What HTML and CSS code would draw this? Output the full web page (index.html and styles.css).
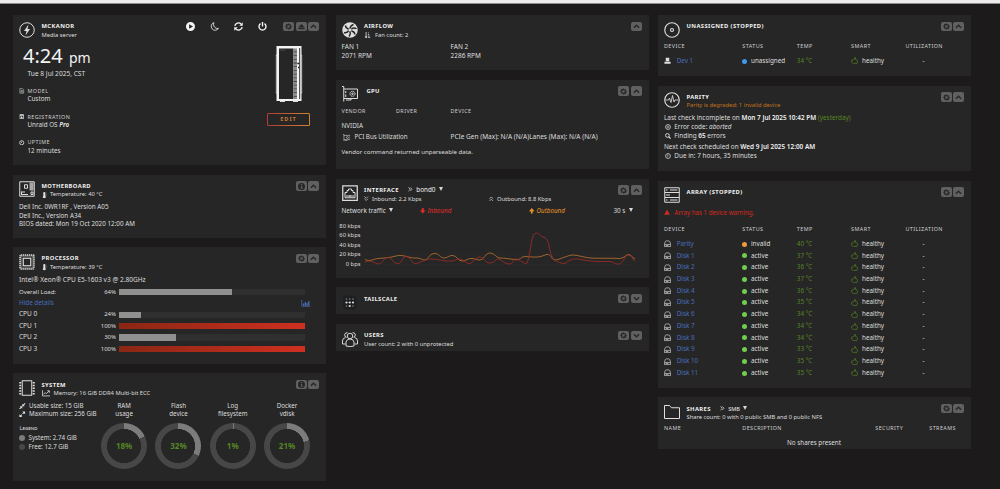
FILE: index.html
```
<!DOCTYPE html>
<html lang="en">
<head>
    <meta charset="utf-8">
    <title>Mckanor Dashboard</title>
    <link rel="stylesheet" href="styles.css">
</head>
<body>
    <svg class="sprite">
        <symbol id="gear" viewBox="0 0 16 16"><path fill-rule="evenodd" d="M7 1h2l.5 2 1.3.6 1.8-1 1.3 1.3-1 1.8.6 1.3 2 .5v2l-2 .5-.6 1.3 1 1.8-1.3 1.3-1.8-1-1.3.6L9 15H7l-.5-2-1.3-.6-1.8 1-1.3-1.3 1-1.8L2.5 9 .5 8.5v-2l2-.5.6-1.3-1-1.8 1.3-1.3 1.8 1L6.5 3zM8 5a3 3 0 1 0 0 6 3 3 0 0 0 0-6z"/></symbol>
        <symbol id="up" viewBox="0 0 16 16"><path d="M2 11l6-6 6 6" fill="none" stroke="currentColor" stroke-width="3"/></symbol>
        <symbol id="down" viewBox="0 0 16 16"><path d="M2 5l6 6 6-6" fill="none" stroke="currentColor" stroke-width="3"/></symbol>
        <symbol id="eject" viewBox="0 0 16 16"><path d="M8 2l7 7.5H1zM1 11h14v3H1z"/></symbol>
        <symbol id="info" viewBox="0 0 16 16"><path fill-rule="evenodd" d="M8 0a8 8 0 1 0 0 16A8 8 0 0 0 8 0zM6.7 2.5h2.800v2.300H6.700zM6 6.500h3.600v5h1V13H6v-1.500h1V8H6z"/></symbol>
        <symbol id="thermo" viewBox="0 0 10 16"><path d="M2 2q0-2 2-2h1q2 0 2 2v8a3.500 3.500 0 1 1-5 0z"/><path d="M8 3h2M8 6h2M8 9h2" stroke="currentColor"/></symbol>
        <symbol id="disk" viewBox="0 0 16 16"><path d="M1.500 9.500V7L3 3q.5-1.500 2-1.500h6q1.500 0 2 1.500l1.500 4v2.500M1 9.500h14v5H1zM4 12h6" fill="none" stroke="currentColor" stroke-width="1.500"/></symbol>
        <symbol id="thumb" viewBox="0 0 16 16"><path d="M4.500 6L8 4V1h2.500v4.500H13l2 3-1.500 5.500H5l-3.500-2.500V6.500z" fill="none" stroke="currentColor" stroke-width="1.500"/></symbol>
    </svg>
    <div class="topbar"></div>
    <div class="dashboard">
        <div class="column">
            <div class="card card-server">
                <div class="head">
                    <svg class="icon" viewBox="0 0 32 32"><circle cx="16" cy="16" r="14.500" fill="none" stroke="currentColor" stroke-width="2"/><path d="M19 5L10 18h5l-2 9 9-13h-5z"/></svg>
                    <div class="heading"><div class="title">MCKANOR</div><div class="sub">Media server</div></div>
                    <div class="power">
                        <svg viewBox="0 0 16 16"><path fill-rule="evenodd" d="M8 0a8 8 0 1 0 0 16A8 8 0 0 0 8 0zM5.500 4l7 4-7 4z"/></svg>
                        <svg viewBox="0 0 16 16"><path d="M7 1a7 7 0 1 0 8 10.500A7.300 7.300 0 0 1 7 1z" fill="none" stroke="currentColor" stroke-width="1.400"/></svg>
                        <svg viewBox="0 0 16 16"><path d="M1.500 7A6.500 6.500 0 0 1 12.500 3.500M14.500 9A6.500 6.500 0 0 1 3.500 12.500" fill="none" stroke="currentColor" stroke-width="2.500"/><path d="M15.500.5v6h-6zM.5 15.500v-6h6z"/></svg>
                        <svg viewBox="0 0 16 16"><path d="M4.500 3a6.200 6.200 0 1 0 7 0M8 0v8" fill="none" stroke="currentColor" stroke-width="2.500"/></svg>
                    </div>
                    <div class="controls"><span><svg><use href="#gear"/></svg></span><span><svg><use href="#eject"/></svg></span><span><svg><use href="#up"/></svg></span></div>
                </div>
                <div class="server-body">
                    <div class="server-info">
                        <div class="clock">4:24 <small>pm</small></div>
                        <div class="date">Tue 8 Jul 2025, CST</div>
                        <div class="fact">
                            <svg viewBox="0 0 14 16"><path d="M1.500 1h7l4 4v10h-11zM4 7h6M4 9.500h6M4 12h6" fill="none" stroke="currentColor" stroke-width="1.500"/></svg>
                            <div><div class="label">MODEL</div><div>Custom</div></div>
                        </div>
                        <div class="fact">
                            <svg viewBox="0 0 14 16"><path fill-rule="evenodd" d="M1 1h12v14H1zM3 5v8h8V5zM7 5.500l1.500 2.500L10 12H4l1.500-4z"/></svg>
                            <div><div class="label">REGISTRATION</div><div>Unraid OS <b><i>Pro</i></b></div></div>
                        </div>
                        <div class="fact">
                            <svg viewBox="0 0 16 16"><circle cx="8" cy="8" r="6" fill="none" stroke="currentColor" stroke-width="2.500"/><path d="M7.300 4.500h1.400v4H6V7h1.300z"/></svg>
                            <div><div class="label">UPTIME</div><div>12 minutes</div></div>
                        </div>
                    </div>
                    <div class="server-side">
                        <svg class="tower" viewBox="0 0 28 56">
                            <path d="M1.500 9v38M26.500 9v38" stroke="#777" stroke-width="1.600"/>
                            <path d="M.8 9h1.500M.8 47h1.500M25.500 9h1.500M25.500 47h1.500" stroke="#ccc" stroke-width=".8"/>
                            <rect x="1.500" y="0" width="25" height="55" fill="#f3f3f3"/>
                            <path d="M5 55.500h5M18 55.500h5" stroke="#ddd" stroke-width="1.500"/>
                            <rect x="4" y="2.500" width="14.500" height="50.500" fill="#262626"/>
                            <path d="M4.500 4h6" stroke="#666" stroke-width=".6"/>
                            <path d="M20.300 2.500v50.500" stroke="#8b8b8b" stroke-width="3.300"/>
                            <path d="M20.300 5.500v46" stroke="#444" stroke-width="3.300" stroke-dasharray=".8 2.900"/>
                            <path d="M24.700 2v51" stroke="#333" stroke-width="1"/>
                            <path d="M22.300 17.500h2M23 21.500h1.500" stroke="#222" stroke-width="1.400"/>
                        </svg>
                        <div class="edit">EDIT</div>
                    </div>
                </div>
            </div>
            <div class="card card-board">
                <div class="head">
                    <svg class="icon" viewBox="0 0 32 32"><path d="M1.500 1.500h29v29h-29z" fill="none" stroke="currentColor" stroke-width="2"/><path d="M11 7.500h6v7h-6zM5 22h7M5 27h13M5 21v7M24 22h4v5h-4z" fill="none" stroke="currentColor" stroke-width="2"/><path d="M21 3h8v16h-8z" opacity=".7"/></svg>
                    <div class="heading"><div class="title">MOTHERBOARD</div><div class="sub"><svg class="mini"><use href="#thermo"/></svg>Temperature: 40 °C</div></div>
                    <div class="controls"><span><svg><use href="#info"/></svg></span><span><svg><use href="#up"/></svg></span></div>
                </div>
                <div class="lines">
                    <div>Dell Inc. 0WR1RF , Version A05</div>
                    <div>Dell Inc., Version A34</div>
                    <div>BIOS dated: Mon 19 Oct 2020 12:00 AM</div>
                </div>
            </div>
            <div class="card card-cpu">
                <div class="head">
                    <svg class="icon" viewBox="0 0 32 32" fill="none" stroke="currentColor"><rect x="2" y="2" width="28" height="28" rx="2" stroke-width="3" stroke-dasharray="2.500 1.500"/><rect x="4" y="4" width="24" height="24" stroke-width="1"/><rect x="8.500" y="8.500" width="15" height="15" stroke-width="2.300"/></svg>
                    <div class="heading"><div class="title">PROCESSOR</div><div class="sub"><svg class="mini"><use href="#thermo"/></svg>Temperature: 39 °C</div></div>
                    <div class="controls"><span><svg><use href="#gear"/></svg></span><span><svg><use href="#up"/></svg></span></div>
                </div>
                <div class="cpu-name">Intel® Xeon® CPU E5-1603 v3 @ 2.80GHz</div>
                <div class="load"><span class="overall">Overall Load:</span><em>64%</em><div class="bar"><div class="fill" style="width:61%"></div></div></div>
                <div class="load-link"><a>Hide details</a><svg viewBox="0 0 18 14"><path d="M1 0v12.500h17" fill="none" stroke="currentColor" stroke-width="1.500"/><path d="M3.500 7H6v4.500H3.500zM7 4h2.500v7.500H7zM10.500 6H13v5.500h-2.500zM14 2h2.500v9.500H14z"/></svg></div>
                <div class="load"><span>CPU 0</span><em>24%</em><div class="bar"><div class="fill" style="width:12%"></div></div></div>
                <div class="load"><span>CPU 1</span><em>100%</em><div class="bar"><div class="fill full" style="width:100%"></div></div></div>
                <div class="load"><span>CPU 2</span><em>30%</em><div class="bar"><div class="fill" style="width:30.700%"></div></div></div>
                <div class="load"><span>CPU 3</span><em>100%</em><div class="bar"><div class="fill full" style="width:100%"></div></div></div>
            </div>
            <div class="card card-system">
                <div class="head">
                    <svg class="icon" viewBox="0 0 32 32" fill="none" stroke="currentColor"><rect x="6.500" y="1.500" width="19" height="29" stroke-width="2"/><path d="M2.500 4v25M29.500 4v25" stroke-width="4" stroke-dasharray="3 2.500"/></svg>
                    <div class="heading"><div class="title">SYSTEM</div><div class="sub"><svg class="mini wide" viewBox="0 0 18 14"><path d="M1 0v13h17M3 9.500l4-4 2.500 2.500L16 2M12 1.500h4.500V6" fill="none" stroke="currentColor" stroke-width="1.800"/></svg>Memory: 16 GiB DDR4 Multi-bit ECC</div></div>
                    <div class="controls"><span><svg><use href="#info"/></svg></span><span><svg><use href="#up"/></svg></span></div>
                </div>
                <div class="memory">
                    <div class="memory-info">
                        <div><svg viewBox="0 0 16 16"><path d="M1 15l6-6M15 1L9 7" stroke="currentColor" stroke-width="2.500"/><path d="M8 14V8H2zM8 2v6h6z"/></svg>Usable size: 15 GiB</div>
                        <div><svg viewBox="0 0 16 16"><path d="M3 13l4-4M13 3L9 7" stroke="currentColor" stroke-width="2.500"/><path d="M1 8v7h7zM15 8V1H8z"/></svg>Maximum size: 256 GiB</div>
                        <div class="legend">Legend</div>
                        <div><i class="dot used"></i>System: 2.74 GiB</div>
                        <div><i class="dot free"></i>Free: 12.7 GiB</div>
                    </div>
                    <div class="gauge">RAM<br>usage<div class="ring" style="--value:18%"><b>18%</b></div></div>
                    <div class="gauge">Flash<br>device<div class="ring" style="--value:32%"><b>32%</b></div></div>
                    <div class="gauge">Log<br>filesystem<div class="ring" style="--value:1%"><b>1%</b></div></div>
                    <div class="gauge">Docker<br>vdisk<div class="ring" style="--value:21%"><b>21%</b></div></div>
                </div>
            </div>
        </div>

        <div class="column">
            <div class="card card-fan">
                <div class="head">
                    <svg class="icon" viewBox="0 0 32 32"><circle cx="16" cy="16" r="15.500"/><g fill="none" stroke="#262626" stroke-width="3"><path d="M16 13q1-6 7-8M19 14q5-4 10-.5M19 18q6 1 7 7M16 19q2 5-2 10M13 18q-4 5-9 3M13 14q-6-2-6-7"/></g><circle cx="16" cy="16" r="3.500" stroke="#262626"/></svg>
                    <div class="heading"><div class="title">AIRFLOW</div><div class="sub"><svg class="mini" viewBox="0 0 14 16"><path d="M3.500 0v13M8 2h2M8 6h3M8 10h4.500M8 14h6" stroke="currentColor" stroke-width="2"/><path d="M0 11h7l-3.500 5z"/></svg>Fan count: 2</div></div>
                    <div class="controls"><span><svg><use href="#up"/></svg></span></div>
                </div>
                <div class="fans"><div>FAN 1<br>2071 RPM</div><div>FAN 2<br>2286 RPM</div></div>
            </div>
            <div class="card card-gpu">
                <div class="head">
                    <svg class="icon" viewBox="0 0 32 32" fill="none" stroke="currentColor" stroke-width="2"><path d="M0 1h3.500v30M4 6h27v19H4M8 28h10v-3M7.500 10v4M7.500 17v5"/><circle cx="21" cy="15.500" r="5" stroke-dasharray="3 1"/><circle cx="21" cy="15.500" r="1.500"/></svg>
                    <div class="heading"><div class="title">GPU</div></div>
                    <div class="controls"><span><svg><use href="#gear"/></svg></span><span><svg><use href="#up"/></svg></span></div>
                </div>
                <div class="gpu-row label"><span>VENDOR</span><span>DRIVER</span><span>DEVICE</span></div>
                <div class="gpu-vendor">NVIDIA</div>
                <div class="gpu-bus"><span><svg viewBox="0 0 16 16" fill="none" stroke="currentColor" stroke-width="1.200"><path d="M0 1h2v14M2 3h13v9H2M4 14h5"/><circle cx="9.500" cy="7.500" r="2"/></svg>PCI Bus Utilization</span><span class="lanes">PCIe Gen (Max): N/A (N/A)Lanes (Max): N/A (N/A)</span></div>
                <div class="gpu-note">Vendor command returned unparseable data.</div>
            </div>
            <div class="card card-net">
                <div class="head">
                    <svg class="icon" viewBox="0 0 32 32" fill="none" stroke="currentColor" stroke-width="2"><path d="M1.500 1.500h29v29h-29z" stroke-width="2.500"/><path d="M6 25.500V15h4v-4h3V8h6v3h3v4h4v10.500z"/><path d="M9 22h14" stroke-width="4" stroke-dasharray="1.500 1"/></svg>
                    <div class="heading">
                        <div class="title">INTERFACE <span class="chosen"><svg viewBox="0 0 10 10"><path d="M1 1l4 4-4 4M5 1l4 4-4 4" fill="none" stroke="currentColor" stroke-width="1.500"/></svg>bond0 <s></s></span></div>
                        <div class="sub net-rates"><span><svg viewBox="0 0 10 12"><path d="M1 1l4 4 4-4M1 6l4 4 4-4" fill="none" stroke="currentColor" stroke-width="1.500"/></svg>Inbound: 2.2 Kbps</span><span><svg viewBox="0 0 10 12"><path d="M1 6l4-4 4 4M1 11l4-4 4 4" fill="none" stroke="currentColor" stroke-width="1.500"/></svg>Outbound: 8.8 Kbps</span></div>
                    </div>
                    <div class="controls"><span><svg><use href="#gear"/></svg></span><span><svg><use href="#up"/></svg></span></div>
                </div>
                <div class="net-row">
                    <span>Network traffic <s></s></span>
                    <i class="in"><svg viewBox="0 0 12 12"><path d="M4 0h4v5h4l-6 7-6-7h4z"/></svg>Inbound</i>
                    <i class="out"><svg viewBox="0 0 12 12"><path d="M4 12h4V7h4L6 0 0 7h4z"/></svg>Outbound</i>
                    <span>30 s <s></s></span>
                </div>
                <div class="chart">
                    <div class="axis"><div>80 kbps</div><div>60 kbps</div><div>40 kbps</div><div>20 kbps</div><div>0 bps</div></div>
                    <svg viewBox="0 0 270 47">
                        <path d="M0 5h270M0 14.400h270M0 23.800h270M0 33.200h270M0 42.500h270" stroke="#2b2b2b" stroke-width=".6"/>
                        <path class="line-out" d="M0 37.500C5 40 8 37 13 36.500S24 36 31 34S43 36 50 36S56 38 60 38C64 37 64 32 69 31.500S75 36 79 36S84 33 88 33.500S93 39 97 39S103 36 107 36.500S112 38 115 38C120 37 120 31 125 31S131 36 135 36S145 37 150 37.500C155 39 156 34 161 34.500S174 36 180 33S186 38 190 38S203 33 208 33S220 36 228 36.200S248 36 255 36.500C260 36 261 32 264 32.500S267 36 270 37"/>
                        <path class="line-in" d="M0 40C6 37 10 42 14 42C19 41 18 35 23 35.500S28 42 33 41.500S37 33 42 34.500S46 42 51 41.500S59 37 66 37S80 40 88 39C96 35 97 38 102 41C108 44 110 34 115 35S120 41 125 41S131 36 134 37S139 42 144 42S148 36 152 37C157 39 160 43 162 41C166 31 166 13 170 11.500S175 14 178 15S183 18 184 24S188 38 190 38.500S196 42 200 41.500C206 37 209 36 216 37.500S235 40 242 39.500S250 43 255 42C259 40 260 32 264 33S267 38 270 39"/>
                    </svg>
                </div>
            </div>
            <div class="card card-tail">
                <div class="head">
                    <svg class="icon" viewBox="0 0 32 32"><rect x="2" y="3" width="27" height="28" rx="7" fill="#1d1f20"/><g fill="#777"><circle cx="9" cy="10" r="1.700"/><circle cx="15.500" cy="10" r="1.700"/><circle cx="22" cy="10" r="1.700"/><circle cx="9" cy="24" r="1.700"/><circle cx="22" cy="24" r="1.700"/></g><circle cx="9" cy="17" r="2.200"/><circle cx="15.500" cy="17" r="2.200"/><circle cx="22" cy="17" r="2.200"/><circle cx="15.500" cy="24" r="2.200"/></svg>
                    <div class="heading"><div class="title">TAILSCALE</div></div>
                    <div class="controls"><span><svg><use href="#gear"/></svg></span><span><svg><use href="#down"/></svg></span></div>
                </div>
            </div>
            <div class="card card-users">
                <div class="head">
                    <svg class="icon" viewBox="0 0 32 32" fill="none" stroke="currentColor" stroke-width="1.900"><circle cx="16" cy="10" r="5.500"/><path d="M8 30V22q1-6 8-6t8 6v8q-8 2.500-16 0z"/><path d="M11 3.500a4.500 4.500 0 1 0-2 9M21 3.500a4.500 4.500 0 1 1 2 9M7 13q-6 1-6 7v6h6M25 13q6 1 6 7v6h-6"/></svg>
                    <div class="heading"><div class="title">USERS</div><div class="sub">User count: 2 with 0 unprotected</div></div>
                    <div class="controls"><span><svg><use href="#gear"/></svg></span><span><svg><use href="#down"/></svg></span></div>
                </div>
            </div>
        </div>

        <div class="column">
            <div class="card card-dev">
                <div class="head">
                    <svg class="icon" viewBox="0 0 32 32" fill="none" stroke="currentColor"><circle cx="16" cy="16" r="14.500" stroke-width="2.300"/><circle cx="16" cy="16" r="3" stroke-width="2.300"/></svg>
                    <div class="heading"><div class="title">UNASSIGNED (STOPPED)</div></div>
                    <div class="controls"><span><svg><use href="#gear"/></svg></span><span><svg><use href="#up"/></svg></span></div>
                </div>
                <div class="row label"><span>DEVICE</span><span>STATUS</span><span>TEMP</span><span>SMART</span><span>UTILIZATION</span></div>
                <div class="row disk-row"><span><svg viewBox="0 0 16 16"><path d="M4 1h8v8H4zM1 10h14v5H1z"/></svg><a>Dev 1</a></span><span><i class="dot blue"></i>unassigned</span><span class="green">34 °C</span><span><svg class="green"><use href="#thumb"/></svg>healthy</span><span class="util">-</span></div>
            </div>
            <div class="card card-parity">
                <div class="head">
                    <svg class="icon" viewBox="0 0 32 32" fill="none" stroke="currentColor"><circle cx="16" cy="16" r="14.500" stroke-width="2.300"/><path d="M3 16h6l2-4 3 9 3-14 3 13 2-4h7" stroke-width="1.700"/></svg>
                    <div class="heading"><div class="title">PARITY</div><div class="sub orange">Parity is degraded: 1 invalid device</div></div>
                    <div class="controls"><span><svg><use href="#gear"/></svg></span><span><svg><use href="#up"/></svg></span></div>
                </div>
                <div class="parity-lines">
                    <div>Last check incomplete on <b>Mon 7 Jul 2025 10:42 PM</b> <span class="green">(yesterday)</span></div>
                    <div><svg viewBox="0 0 16 16"><circle cx="8" cy="8" r="6.500" fill="none" stroke="currentColor" stroke-width="2"/><circle cx="8" cy="8" r="2.500" fill="none" stroke="currentColor" stroke-width="1.500"/></svg>Error code: <i>aborted</i></div>
                    <div><svg viewBox="0 0 16 16"><circle cx="6.500" cy="6.500" r="5" fill="none" stroke="currentColor" stroke-width="2.500"/><path d="M10 10l5 5" stroke="currentColor" stroke-width="3"/></svg>Finding <b>65</b> errors</div>
                    <div class="next">Next check scheduled on <b>Wed 9 Jul 2025 12:00 AM</b></div>
                    <div><svg viewBox="0 0 16 16"><circle cx="8" cy="8" r="6.500" fill="none" stroke="currentColor" stroke-width="2"/><path d="M8 4v4.500H5" fill="none" stroke="currentColor" stroke-width="1.500"/></svg>Due in: 7 hours, 35 minutes</div>
                </div>
            </div>
            <div class="card card-array">
                <div class="head">
                    <svg class="icon" viewBox="0 0 32 32" fill="none" stroke="currentColor" stroke-width="2"><path d="M1.500 1.500h29v29h-29zM1.500 11h29M1.500 21h29M4 6h3M12 6h15M4 16h8M4 26h3M12 26h15"/></svg>
                    <div class="heading"><div class="title">ARRAY (STOPPED)</div></div>
                    <div class="controls"><span><svg><use href="#gear"/></svg></span><span><svg><use href="#up"/></svg></span></div>
                </div>
                <div class="warning"><svg viewBox="0 0 16 16"><path d="M8 1l7.500 14H.5z"/></svg>Array has 1 device warning.</div>
                <div class="row label"><span>DEVICE</span><span>STATUS</span><span>TEMP</span><span>SMART</span><span>UTILIZATION</span></div>
                <div id="disks"></div>
            </div>
            <div class="card card-shares">
                <div class="head">
                    <svg class="icon" viewBox="0 0 32 32"><path d="M1 29V3h10l4 4.500h16V29z" fill="none" stroke="currentColor" stroke-width="2"/></svg>
                    <div class="heading"><div class="title">SHARES <span class="chosen small"><svg viewBox="0 0 10 10"><path d="M1 1l4 4-4 4M5 1l4 4-4 4" fill="none" stroke="currentColor" stroke-width="1.500"/></svg>SMB <s></s></span></div><div class="sub">Share count: 0 with 0 public SMB and 0 public NFS</div></div>
                    <div class="controls"><span><svg><use href="#gear"/></svg></span><span><svg><use href="#up"/></svg></span></div>
                </div>
                <div class="share-row label"><span>NAME</span><span>DESCRIPTION</span><span>SECURITY</span><span>STREAMS</span></div>
                <div class="no-shares">No shares present</div>
            </div>
        </div>
    </div>

    <script>
        var temps = [40, 37, 36, 37, 36, 35, 34, 34, 34, 33, 35, 35];
        var html = '';
        temps.forEach(function (temp, i) {
            var name = i === 0 ? 'Parity' : 'Disk ' + i;
            var status = i === 0 ? '<i class="dot amber"></i>invalid' : '<i class="dot lime"></i>active';
            html += '<div class="row disk-row"><span><svg><use href="#disk"/></svg><a>' + name + '</a></span>' +
                '<span>' + status + '</span><span class="green">' + temp + ' °C</span>' +
                '<span><svg class="green"><use href="#thumb"/></svg>healthy</span><span class="util">-</span></div>';
        });
        document.getElementById('disks').innerHTML = html;
    </script>
</body>
</html>
```
FILE: styles.css
```
* {
    box-sizing: border-box;
}

body {
    margin: 0;
    height: 489px;
    overflow: hidden;
    background-color: #1c1a1b;
    color: #dedede;
    font-family: "Noto Sans", sans-serif;
    font-size: 6.3px;
    line-height: 8.6px;
    white-space: nowrap;
}

svg {
    flex: none;
}

svg:not([fill]) {
    fill: currentColor;
}

.sprite {
    display: none;
}

.topbar {
    height: 4px;
    background-color: #ececec;
    border-bottom: 1px solid #8d8d8d;
}

.dashboard {
    display: grid;
    grid-template-columns: 313px 313px 313px;
    gap: 9.5px;
    padding: 11px 0 0 13px;
    align-items: start;
}

.column {
    display: flex;
    flex-direction: column;
    gap: 9.6px;
}

.card {
    padding: 6.7px 7px 0 6px;
    background-color: #262626;
}

.card-server { height: 150px; }
.card-board { height: 63px; }
.card-cpu { height: 116.5px; }
.card-system { height: 108px; }
.card-fan { height: 55px; }
.card-gpu { height: 89.5px; }
.card-net { height: 99px; }
.card-tail { height: 27px; }
.card-users { height: 27px; }
.card-dev { height: 61px; }
.card-parity { height: 85.5px; }
.card-array { height: 207px; }
.card-shares { height: 52px; }

.head {
    display: flex;
    height: 17.2px;
}

.icon {
    width: 16px;
    height: 16px;
    margin-right: 6.5px;
}

.heading {
    flex: 1;
    padding-top: .6px;
}

.title {
    height: 8.6px;
    font-size: 5.8px;
    font-weight: bold;
    letter-spacing: .4px;
    color: #f0f0f0;
}

.sub,
.sub span {
    display: flex;
    align-items: center;
}

.sub {
    font-size: 5.8px;
}

.mini {
    width: 5px;
    height: 6.5px;
    margin-right: 3.5px;
}

.mini.wide {
    width: 8px;
    margin-right: 4px;
}

.card-fan .mini {
    width: 7px;
    margin-right: 4px;
}

.controls {
    display: flex;
    gap: 1.5px;
}

.controls span {
    display: flex;
    align-items: center;
    justify-content: center;
    width: 11px;
    height: 9.5px;
    border-radius: 2px;
    background-color: #606060;
    color: #262626;
}

.controls svg {
    width: 7px;
    height: 7px;
}

.power {
    display: flex;
    gap: 14.7px;
    margin-right: 16.5px;
}

.power svg {
    width: 9px;
    height: 9px;
    color: #f4f4f4;
}

.label {
    font-size: 5.4px;
    letter-spacing: .43px;
    color: #cfcfcf;
}

.server-body {
    display: flex;
    justify-content: space-between;
}

.clock {
    padding: 5.5px 0 0 4px;
    font-size: 20px;
    line-height: 23px;
    color: #f4f4f4;
}

.clock small {
    margin-left: 1px;
    font-size: 14px;
}

.date {
    padding-left: 8.5px;
    margin: .7px 0 8.2px;
    font-size: 6.6px;
}

.fact {
    display: flex;
    gap: 3px;
    margin-bottom: 8.5px;
}

.fact svg {
    width: 5.5px;
    height: 5.5px;
    margin-top: 1.3px;
}

.server-side {
    display: flex;
    flex-direction: column;
    align-items: center;
    padding: 7px 9px 0 0;
}

.tower {
    width: 28px;
    height: 56px;
}

.edit {
    width: 43px;
    height: 13px;
    margin-top: 11px;
    border: 1px solid transparent;
    border-radius: 1.5px;
    background: linear-gradient(#262626, #262626) padding-box, linear-gradient(90deg, #b33b34, #d08230) border-box;
    font-size: 5.5px;
    font-weight: bold;
    line-height: 11.5px;
    letter-spacing: 1px;
    text-align: center;
    color: #c8762f;
}

.lines {
    margin-top: 4.7px;
}

.cpu-name {
    margin-top: 5px;
    margin-bottom: 1.5px;
    font-size: 6.55px;
}

.load,
.load-link {
    display: flex;
    align-items: center;
    height: 11.45px;
}

.load span {
    width: 72px;
    font-size: 6.5px;
}

.load .overall {
    font-size: 6px;
}

.load em {
    width: 25px;
    margin-right: 3px;
    font-size: 6px;
    font-style: normal;
    text-align: right;
}

.bar {
    width: 185.5px;
    height: 6.5px;
    background-color: #2f2f2f;
}

.fill {
    height: 100%;
    background-color: #909090;
}

.fill.full {
    background: linear-gradient(90deg, #8a2614, #cf3020);
}

.load-link {
    justify-content: space-between;
    padding-right: 8.5px;
    color: #486dba;
}

.load-link svg {
    width: 9.5px;
    height: 7px;
}

a {
    color: #486dba;
}

.memory {
    display: flex;
    margin-top: 4.5px;
    font-size: 6.2px;
}

.memory-info {
    width: 78px;
}

.memory-info div {
    display: flex;
    align-items: center;
}

.memory-info svg {
    width: 6.5px;
    height: 6.5px;
    margin-right: 3.5px;
}

.memory-info .legend {
    margin: 4.8px 0 1.7px .5px;
    font-size: 5.6px;
    font-variant: small-caps;
}

.dot {
    display: inline-block;
    width: 5px;
    height: 5px;
    border-radius: 50%;
    flex: none;
}

.memory-info .dot {
    width: 6px;
    height: 6px;
    margin-right: 3.5px;
}

.used { background-color: #7c7c7c; }
.free { background-color: #474747; }
.blue { background-color: #3f97f0; }
.amber { background-color: #f39a38; }
.lime { background-color: #6fce4e; }

.gauge {
    width: 54.3px;
    text-align: center;
}

.ring {
    display: flex;
    align-items: center;
    justify-content: center;
    width: 46px;
    height: 46px;
    margin: 4px auto 0;
    border-radius: 50%;
    background: radial-gradient(#262626 16.8px, transparent 17.3px), conic-gradient(#7c7c7c var(--value), #474747 0);
    font-size: 8px;
    color: #578524;
}

.fans {
    display: grid;
    grid-template-columns: 109px 1fr;
    margin-top: 4.5px;
    font-size: 6.5px;
}

.card-gpu .heading {
    padding-left: 2.5px;
}

.gpu-row {
    display: grid;
    grid-template-columns: 54.5px 54.5px 1fr;
    margin-top: 3.8px;
}

.gpu-vendor {
    margin-top: 5.8px;
}

.gpu-bus {
    display: grid;
    grid-template-columns: 109px 1fr;
    margin-top: 3px;
    font-size: 6.2px;
}

.gpu-bus .lanes {
    font-size: 6.5px;
}

.gpu-bus span {
    display: flex;
    align-items: center;
}

.gpu-bus svg {
    width: 7.5px;
    height: 7.5px;
    margin: 0 4.5px 0 1px;
}

.gpu-note {
    margin-top: 5.8px;
    font-size: 6.1px;
}

.chosen {
    margin-left: 7.5px;
    font-size: 6.3px;
    font-weight: normal;
    letter-spacing: 0;
}

.chosen svg {
    width: 4.5px;
    height: 4.5px;
    margin-right: 3.5px;
}

.chosen.small {
    font-size: 5.6px;
}

s {
    display: inline-block;
    margin: 0 0 .8px 2px;
    border: 2px solid transparent;
    border-top: 4px solid #d8d8d8;
    border-bottom: 0;
}

.net-rates span {
    width: 125px;
}

.net-rates svg {
    width: 4.5px;
    height: 5.5px;
    margin-right: 3.5px;
}

.net-row {
    display: grid;
    grid-template-columns: 78.5px 109px 84.5px 1fr;
    margin-top: 4.6px;
}

.net-row i svg {
    width: 5.5px;
    height: 5.5px;
    margin-right: 2px;
    vertical-align: -.5px;
}

.in { color: #e02d28; }
.out { color: #e8922a; }

.chart {
    display: flex;
    margin-top: 6.2px;
    gap: 4px;
}

.axis {
    width: 19px;
    font-size: 5.8px;
    line-height: 9.4px;
}

.axis div {
    display: flex;
    justify-content: flex-end;
}

.chart svg {
    width: 270px;
    height: 47px;
}

.line-in,
.line-out {
    fill: none;
    stroke-width: .8;
}

.line-in { stroke: #a52c2a; }
.line-out { stroke: #bd752c; }

.row {
    display: grid;
    grid-template-columns: 78.3px 54.5px 54.3px 54.3px 1fr;
}

.disk-row {
    height: 11.74px;
    align-items: center;
}

.row span {
    display: flex;
    align-items: center;
}

.row svg {
    width: 7px;
    height: 7.5px;
    margin-right: 4px;
}

.row span:first-child svg {
    margin-right: 5.7px;
}

.row .dot {
    margin-right: 3.7px;
}

.row .util {
    padding-left: 17px;
}

.green {
    color: #578524;
}

.orange {
    color: #c0731d;
}

.card-dev .label {
    margin-top: 3.5px;
}

.card-dev .disk-row {
    margin-top: 4.3px;
}

.parity-lines {
    margin-top: 4.3px;
    font-size: 6.4px;
}

.parity-lines div {
    height: 8.9px;
}

.parity-lines svg {
    width: 6px;
    height: 6px;
    margin: 0 3px 0 1.3px;
    vertical-align: -1px;
}

.parity-lines .next {
    margin-top: 3px;
}

.parity-lines b {
    color: #f0f0f0;
    font-weight: 600;
}

.warning {
    margin-top: 4px;
    font-size: 6.2px;
    color: #d3291f;
}

.warning svg {
    width: 6px;
    height: 6px;
    margin-right: 4.5px;
}

.card-array .label {
    margin: 8px 0 4.5px;
}

.share-row {
    display: grid;
    grid-template-columns: 78.3px 133px 54px 1fr;
    margin-top: 2.5px;
}

.no-shares {
    margin-top: 6.3px;
    text-align: center;
}
```
